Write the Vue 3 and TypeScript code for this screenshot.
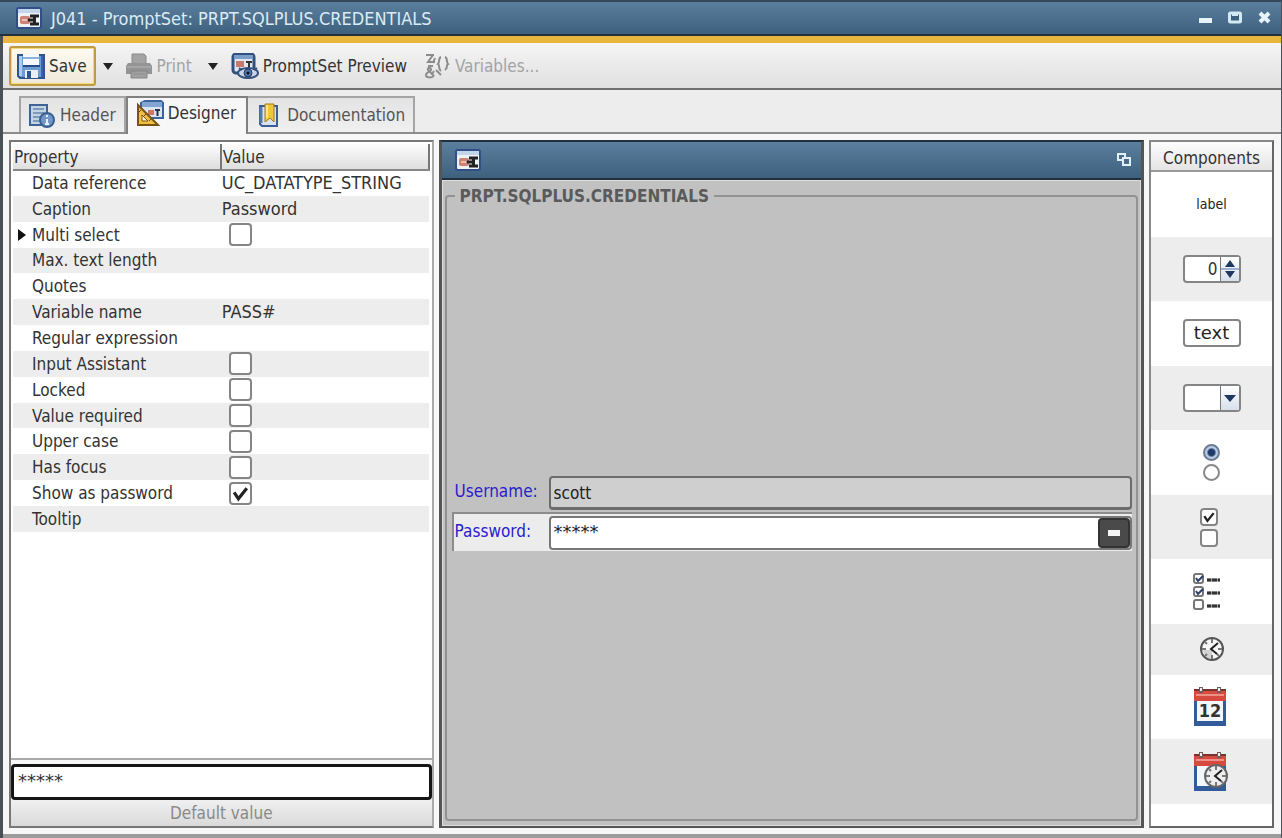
<script setup lang="ts">
import { reactive, ref } from 'vue'

interface PropertyRow {
  name: string
  text?: string
  flag?: boolean
  checkable?: boolean
  expandable?: boolean
}

const properties = reactive<PropertyRow[]>([
  { name: 'Data reference', text: 'UC_DATATYPE_STRING' },
  { name: 'Caption', text: 'Password' },
  { name: 'Multi select', checkable: true, flag: false, expandable: true },
  { name: 'Max. text length' },
  { name: 'Quotes' },
  { name: 'Variable name', text: 'PASS#' },
  { name: 'Regular expression' },
  { name: 'Input Assistant', checkable: true, flag: false },
  { name: 'Locked', checkable: true, flag: false },
  { name: 'Value required', checkable: true, flag: false },
  { name: 'Upper case', checkable: true, flag: false },
  { name: 'Has focus', checkable: true, flag: false },
  { name: 'Show as password', checkable: true, flag: true },
  { name: 'Tooltip' },
])

const defaultValue = ref('*****')
const username = ref('scott')
const password = ref('*****')
</script>

<template>
  <div class="window">
    <header class="titlebar">
      <svg class="form-icon" viewBox="0 0 26 22" aria-hidden="true">
        <rect x="1" y="1" width="24" height="20" rx="2" fill="#eef1f6" stroke="#2f4f86" stroke-width="2" />
        <rect x="2" y="2" width="22" height="4" fill="#c3d5ea" />
        <rect x="4" y="9" width="10" height="8" rx="2" fill="#c98476" />
        <path d="M6 13h5" stroke="#e9c0b7" stroke-width="2" />
        <path d="M14 9h9M14 17h9M18.500 9v8M12 13h5" stroke="#222" stroke-width="3" fill="none" />
      </svg>
      <h1>J041 - PromptSet: PRPT.SQLPLUS.CREDENTIALS</h1>
      <div class="window-buttons">
        <button type="button" aria-label="Minimize">
          <svg viewBox="0 0 16 16"><rect x="2" y="8" width="13" height="5" fill="#e6f3f9" /></svg>
        </button>
        <button type="button" aria-label="Maximize">
          <svg viewBox="0 0 16 16">
            <rect x="2.500" y="3" width="11" height="9" rx="1" fill="#3f6280" stroke="#d3eaf5" stroke-width="3" />
            <path d="M5 5h6" stroke="#d3eaf5" stroke-width="2" />
          </svg>
        </button>
        <button type="button" aria-label="Close">
          <svg viewBox="0 0 16 16"><path d="M3 3l9 9M12 3l-9 9" stroke="#e6f3f9" stroke-width="4" /></svg>
        </button>
      </div>
    </header>

    <div class="toolbar" role="toolbar" aria-label="PromptSet">
      <button type="button" class="tool save">
        <svg viewBox="0 0 28 26" aria-hidden="true">
          <path d="M1 2h26v23H3l-2-2z" fill="#6f9bd3" stroke="#2f558f" stroke-width="2" />
          <path d="M2 3h3v20H2z" fill="#a9cdf0" />
          <rect x="6" y="1" width="16" height="12" fill="#f4f8fb" />
          <path d="M6 5h16" stroke="#8fb3d8" stroke-width="2" />
          <path d="M6 13h17" stroke="#274c88" stroke-width="2" />
          <rect x="8" y="17" width="13" height="8" fill="#e9eef3" />
          <rect x="10" y="18" width="4" height="7" fill="#2d558f" />
          <path d="M24 3h2v21h-2z" fill="#3a66a8" />
        </svg>
        Save
      </button>
      <button type="button" class="arrow" aria-label="Save options">
        <svg viewBox="0 0 10 8"><path d="M0 1h10L5 8z" fill="#222" /></svg>
      </button>
      <button type="button" class="tool print" disabled>
        <svg viewBox="0 0 28 26" aria-hidden="true">
          <path d="M7 1h12l2 2v8H7z" fill="#a4a4a4" stroke="#888" />
          <path d="M3 10h22l2 3v8H1v-8z" fill="#949494" />
          <path d="M2 14h24" stroke="#a6a6a6" stroke-width="2" />
          <path d="M6 18h16v7H6z" fill="#a0a0a0" stroke="#858585" />
          <path d="M8 21h12" stroke="#8e8e8e" />
        </svg>
        Print
      </button>
      <button type="button" class="arrow" aria-label="Print options">
        <svg viewBox="0 0 10 8"><path d="M0 1h10L5 8z" fill="#222" /></svg>
      </button>
      <button type="button" class="tool preview">
        <svg viewBox="0 0 28 26" aria-hidden="true">
          <rect x="2" y="1" width="21" height="19" rx="3" fill="#dfe7f1" stroke="#31507f" stroke-width="3" />
          <rect x="3" y="2" width="19" height="4" fill="#7b9dca" />
          <rect x="5" y="8" width="8" height="6" fill="#c67a6c" />
          <path d="M15 9h6M18 9v6" stroke="#333" stroke-width="2" />
          <ellipse cx="17" cy="20" rx="10" ry="5" fill="#c8d5e6" stroke="#35507d" stroke-width="2" />
          <circle cx="17" cy="20" r="4" fill="#4e76ad" stroke="#243c65" />
          <circle cx="17" cy="20" r="1.500" fill="#111" />
          <path d="M8 15l3 2M26 15l-3 2" stroke="#35507d" stroke-width="2" />
        </svg>
        PromptSet Preview
      </button>
      <button type="button" class="tool variables" disabled>
        <svg viewBox="0 0 28 26" aria-hidden="true" fill="none" stroke="#8c8c8c" stroke-width="2">
          <path d="M3 2h8M10 2L5 9h7M12 5l-2 5" />
          <path d="M11 23c-3 2-8 2-8-1 0-4 6-3 5-6-1-2-4-1-3 1l6 6M5 13h5M11 18l-2 3" />
          <path d="M18 4c-3 1-1 5-3 7 2 1 0 5 3 7M22 4c3 1 1 5 3 7-2 1 0 4-3 6" />
          <path d="M13 17l5 5" />
        </svg>
        Variables...
      </button>
    </div>

    <nav class="tabs" role="tablist">
      <button type="button" role="tab" aria-selected="false" class="tab">
        <svg viewBox="0 0 28 26" aria-hidden="true">
          <rect x="2" y="3" width="17" height="20" fill="#c3d3e3" stroke="#3e6394" stroke-width="2" />
          <path d="M5 7h11M5 11h11M5 15h8M5 19h7" stroke="#7c9abc" stroke-width="2" />
          <circle cx="19" cy="18" r="7" fill="#7398c8" stroke="#3b5f94" stroke-width="2" />
          <path d="M19 17v5M19 13v2M17 22h4" stroke="#e8f0f8" stroke-width="2" />
        </svg>
        Header
      </button>
      <button type="button" role="tab" aria-selected="true" class="tab active">
        <svg viewBox="0 0 28 26" aria-hidden="true">
          <path d="M5 3l4-2h16l2 2v15H5z" fill="#dbe5f2" stroke="#3c639b" stroke-width="2" />
          <path d="M6 2h20v5H6z" fill="#82a5d4" />
          <rect x="12" y="10" width="6" height="5" fill="#cf7568" />
          <path d="M19 10h5M21.500 10v6" stroke="#26334a" stroke-width="2" />
          <path d="M2 5v20h20z" fill="#f0bf42" stroke="#795514" stroke-width="2" />
          <path d="M6 15v6h6z" fill="#f9f1d5" stroke="#795514" />
          <path d="M5 10l-2 2M10 14l-2 2M15 19l-2 2" stroke="#68470c" />
        </svg>
        Designer
      </button>
      <button type="button" role="tab" aria-selected="false" class="tab">
        <svg viewBox="0 0 28 26" aria-hidden="true">
          <path d="M5 4h17v20H7l-2-2z" fill="#d8e3ef" stroke="#3b5f94" stroke-width="2" />
          <path d="M6 5v16" stroke="#527ab0" stroke-width="3" />
          <path d="M10 2h9v18l-4-4-5 4z" fill="#f0c634" stroke="#a47b17" />
          <path d="M12 3v13" stroke="#fae58b" stroke-width="2" />
        </svg>
        Documentation
      </button>
    </nav>

    <main class="workspace">
      <section class="properties" aria-label="Properties">
        <div class="property-area">
          <table>
            <thead>
              <tr><th class="name-col">Property</th><th>Value</th></tr>
            </thead>
            <tbody>
              <tr v-for="row in properties" :key="row.name">
                <td class="name">
                  <svg v-if="row.expandable" class="expander" viewBox="0 0 8 12" aria-hidden="true"><path d="M0 0l8 6-8 6z" fill="#111" /></svg>
                  {{ row.name }}
                </td>
                <td class="value">
                  <input v-if="row.checkable" v-model="row.flag" type="checkbox" class="check" :aria-label="row.name" />
                  <template v-else>{{ row.text }}</template>
                </td>
              </tr>
            </tbody>
          </table>
        </div>
        <div class="default-area">
          <input id="default-value" v-model="defaultValue" class="masked" type="text" />
          <label for="default-value">Default value</label>
        </div>
      </section>

      <section class="designer" aria-label="Designer">
        <header class="designer-title">
          <svg class="form-icon" viewBox="0 0 26 22" aria-hidden="true">
            <rect x="1" y="1" width="24" height="20" rx="2" fill="#eef1f6" stroke="#2f4f86" stroke-width="2" />
            <rect x="2" y="2" width="22" height="4" fill="#c3d5ea" />
            <rect x="4" y="9" width="10" height="8" rx="2" fill="#c98476" />
            <path d="M6 13h5" stroke="#e9c0b7" stroke-width="2" />
            <path d="M14 9h9M14 17h9M18.500 9v8M12 13h5" stroke="#222" stroke-width="3" fill="none" />
          </svg>
          <button type="button" aria-label="Restore">
            <svg viewBox="0 0 16 16" fill="#4b6c89" stroke="#e2eff6" stroke-width="2">
              <rect x="2" y="2" width="7" height="6" />
              <rect x="7" y="6" width="7" height="7" />
            </svg>
          </button>
        </header>
        <div class="canvas">
          <fieldset>
            <legend>PRPT.SQLPLUS.CREDENTIALS</legend>
            <div class="prompts">
              <div class="prompt">
                <label for="username">Username:</label>
                <input id="username" v-model="username" type="text" />
              </div>
              <div class="prompt selected">
                <label for="password">Password:</label>
                <div class="entry">
                  <input id="password" v-model="password" class="masked" type="text" />
                  <button type="button" aria-label="Remove">
                    <svg viewBox="0 0 12 6"><rect width="12" height="6" fill="#f4f4f4" /></svg>
                  </button>
                </div>
              </div>
            </div>
          </fieldset>
        </div>
      </section>

      <section class="palette" aria-labelledby="palette-title">
        <h2 id="palette-title">Components</h2>
        <ul>
          <li class="sample-label">label</li>
          <li>
            <div class="box">
              <input class="number" type="text" value="0" aria-label="Number" />
              <span class="box-button">
                <svg viewBox="0 0 18 24"><path d="M0 12h18" stroke="#9fb2cf" stroke-width="2" /><path d="M9 3l5 7H4zM9 21l5-7H4z" fill="#203860" /></svg>
              </span>
            </div>
          </li>
          <li>
            <div class="box"><input class="sample-text" type="text" value="text" aria-label="Text" /></div>
          </li>
          <li>
            <div class="box">
              <select aria-label="Combo box"><option></option></select>
              <span class="box-button overlay">
                <svg viewBox="0 0 18 24"><path d="M3 9h12l-6 7z" fill="#203860" /></svg>
              </span>
            </div>
          </li>
          <li class="stack">
            <input type="radio" name="sample" checked aria-label="First option" />
            <input type="radio" name="sample" aria-label="Second option" />
          </li>
          <li class="stack">
            <input type="checkbox" class="check small" checked aria-label="Checked option" />
            <input type="checkbox" class="check small" aria-label="Unchecked option" />
          </li>
          <li>
            <svg class="checklist" viewBox="0 0 28 40" aria-hidden="true">
              <g fill="#fff" stroke="#777" stroke-width="2">
                <rect x="1" y="2" width="9" height="9" rx="2" />
                <rect x="1" y="15" width="9" height="9" rx="2" />
                <rect x="1" y="28" width="9" height="9" rx="2" />
              </g>
              <path d="M3 6l2 3 5-5M3 19l2 3 5-5" stroke="#263e68" stroke-width="2" fill="none" />
              <path d="M14 8h13M14 21h13M14 34h13" stroke="#999" stroke-width="3" />
              <path d="M14 8h13M14 21h13M14 34h13" stroke="#333" stroke-width="3" stroke-dasharray="4 1 5 1" />
            </svg>
          </li>
          <li>
            <svg class="clock" viewBox="0 0 26 26" aria-hidden="true">
              <circle cx="13" cy="13" r="11" fill="#f7f7f7" stroke="#555" stroke-width="2" />
              <path d="M4 14h9v9c-5 0-8-4-9-9z" fill="#d2d2d2" />
              <path d="M13 3v4M13 19v4M3 13h4M19 13h4M6 6l2 2M20 20l-2-2M6 20l2-2" stroke="#777" stroke-width="2" />
              <path d="M19 7l-7 6 6 5" fill="none" stroke="#222" stroke-width="2" />
            </svg>
          </li>
          <li>
            <svg class="calendar" viewBox="0 0 36 40" role="img" aria-label="Date">
              <rect x="2" y="2" width="32" height="37" fill="#315b99" />
              <rect x="2" y="2" width="32" height="12" fill="#d64a40" />
              <path d="M2 3h32" stroke="#76342f" stroke-width="2" />
              <path d="M4 8h28" stroke="#ed9088" stroke-width="2" />
              <rect x="5" y="14" width="26" height="20" fill="#f3f6fa" />
              <path d="M9 0v6M27 0v6" stroke="#725b5b" stroke-width="4" />
              <path d="M9 1v3M27 1v3" stroke="#eee" stroke-width="2" />
              <text x="18" y="30" text-anchor="middle">12</text>
            </svg>
          </li>
          <li>
            <svg class="calendar" viewBox="0 0 36 40" aria-hidden="true">
              <rect x="2" y="2" width="32" height="37" fill="#315b99" />
              <rect x="2" y="2" width="32" height="12" fill="#d64a40" />
              <path d="M2 3h32" stroke="#76342f" stroke-width="2" />
              <path d="M4 8h28" stroke="#ed9088" stroke-width="2" />
              <rect x="5" y="14" width="26" height="20" fill="#f3f6fa" />
              <path d="M9 0v6M27 0v6" stroke="#725b5b" stroke-width="4" />
              <path d="M9 1v3M27 1v3" stroke="#eee" stroke-width="2" />
              <circle cx="24" cy="24" r="11" fill="#eee" stroke="#666" stroke-width="2" />
              <path d="M24 14v4M24 30v4M14 24h4M30 24h4M17 17l2 2M31 31l-2-2M17 31l2-2" stroke="#777" stroke-width="2" />
              <path d="M30 18l-7 6 6 5" fill="none" stroke="#222" stroke-width="2" />
            </svg>
          </li>
        </ul>
      </section>
    </main>
  </div>
</template>

<style>
body {
  margin: 0;
}
</style>

<style scoped>
* {
  box-sizing: border-box;
}

.window {
  display: flex;
  flex-direction: column;
  min-height: 100vh;
  padding-bottom: 4px;
  border: solid #4a5058;
  border-width: 0 1px 0 3px;
  background: linear-gradient(#f7f7f7, #f7f7f7) top / 100% calc(100% - 4px) no-repeat #9c9c9c;
  color: #333;
  font-family: "DejaVu Sans Condensed", "DejaVu Sans", sans-serif;
  font-size: 17px;
  line-height: 24px;
}

button,
input,
select {
  margin: 0;
  padding: 0;
  border: 0;
  background: none;
  color: inherit;
  font: inherit;
}

svg {
  display: block;
  flex: none;
}

.titlebar {
  display: flex;
  align-items: center;
  gap: 9px;
  height: 36px;
  margin-left: -3px;
  padding: 0 8px 0 16px;
  border-top: 2px solid #35495b;
  border-bottom: 2px solid #23303b;
  background: linear-gradient(#5a7e9d, #3d617d);
  color: #dcebf4;
}

.form-icon {
  width: 26px;
  height: 22px;
}

h1 {
  flex: 1;
  margin: 0;
  padding-top: 2px;
  font-size: 18px;
  font-weight: 400;
}

.window-buttons {
  display: flex;
  gap: 14px;
}

.window-buttons svg {
  width: 16px;
  height: 16px;
}

.toolbar {
  display: flex;
  align-items: center;
  height: 54px;
  padding: 0 6px;
  border-top: 7px solid #e8b63c;
  border-bottom: 2px solid #707070;
  background: linear-gradient(#f5f5f5, #e0e0e0);
}

.tool {
  display: flex;
  align-items: center;
  gap: 4px;
  white-space: nowrap;
}

.tool svg,
.tab svg {
  width: 28px;
  height: 26px;
}

.tool:disabled {
  color: #a3a3a3;
}

.save {
  height: 40px;
  padding: 0 7px 0 6px;
  border: 2px solid #c09c41;
  border-radius: 3px;
  background: linear-gradient(#fffaf0, #eee9da);
  box-shadow: inset 0 0 0 1px #f4d979;
}

.arrow {
  padding: 6px 7px;
}

.arrow svg {
  width: 10px;
  height: 8px;
}

.print {
  margin: 0 9px 0 5px;
}

.preview {
  margin: 0 16px 0 6px;
}

.tabs {
  display: flex;
  align-items: flex-end;
  height: 44px;
  padding: 6px 16px 0;
  border-bottom: 2px solid #8c8c8c;
  background: #ededed;
}

.tab {
  display: flex;
  align-items: center;
  gap: 4px;
  height: 36px;
  padding: 0 8px 0 7px;
  border: 2px solid #a5a5a5;
  border-bottom: 0;
  background: linear-gradient(#e3e3e3, #f0f0f0);
  color: #555;
}

.tab + .tab {
  border-left: 0;
}

.tab.active {
  height: 38px;
  margin-bottom: -2px;
  padding: 0 10px 6px 8px;
  border-color: #808080;
  border-left: 2px solid #808080;
  background: #f7f7f7;
  color: #333;
}

.workspace {
  display: grid;
  flex: 1;
  grid-template-columns: minmax(0, 425fr) minmax(0, 706fr) 125px;
  gap: 5px;
  padding: 6px 7px 6px 6px;
}

.properties,
.designer,
.palette {
  display: flex;
  flex-direction: column;
}

.properties {
  border: 2px solid #777;
  border-right-color: #aaa;
  background: #f7f7f7;
}

.property-area {
  flex: 1;
  padding: 2px 2px 0;
  border-bottom: 2px solid #aaa;
  background: #fff;
}

table {
  width: 100%;
  height: 388px;
  border-collapse: collapse;
  table-layout: fixed;
  line-height: 20px;
}

th {
  height: 26px;
  padding: 0 1px;
  border-right: 2px solid #777;
  border-bottom: 2px solid #888;
  background: linear-gradient(#fdfdfd, #dedede);
  font-weight: 400;
  text-align: left;
}

th.name-col {
  width: 50%;
}

th,
td {
  vertical-align: middle;
}

td {
  height: 25px;
  padding: 0 1px;
}

td.name {
  padding-left: 19px;
}

td.value {
  font-size: 18px;
}

tbody tr:nth-child(even) {
  background: #ededed;
}

.expander {
  float: left;
  width: 8px;
  height: 12px;
  margin: 4px 0 0 -14px;
}

.check {
  display: block;
  width: 23px;
  height: 23px;
  margin-left: 7px;
  border: 2px solid #858585;
  border-radius: 4px;
  appearance: none;
  background: #fff;
}

.check:checked {
  background: #fff url("data:image/svg+xml,%3Csvg xmlns='http://www.w3.org/2000/svg' viewBox='0 0 18 18'%3E%3Cpath d='M3 8l4 6 8-10' fill='none' stroke='%23222' stroke-width='3'/%3E%3C/svg%3E") center / 100% no-repeat;
}

.default-area {
  display: flex;
  flex-direction: column;
  margin-top: 4px;
}

.default-area input {
  width: 100%;
  height: 36px;
  padding: 0 4px 4px;
  border: 3px solid #151515;
  border-radius: 4px;
  background: #fff;
}

.default-area label {
  height: 26px;
  padding-top: 1px;
  background: linear-gradient(#f0f0f0, #dadada);
  color: #8a8a8a;
  text-align: center;
}

.designer {
  border: 3px solid #555;
  border-top: 2px solid #22303e;
  border-bottom-width: 2px;
}

.designer-title {
  display: flex;
  align-items: center;
  justify-content: space-between;
  height: 38px;
  padding: 0 9px 0 13px;
  border-bottom: 2px solid #22303e;
  background: linear-gradient(#5a7e9d, #3d617d);
}

.designer-title button svg {
  width: 16px;
  height: 16px;
}

.canvas {
  display: flex;
  flex: 1;
  padding: 3px 2px 4px;
  border: 1px solid #dedede;
  background: #c1c1c1;
}

fieldset {
  display: flex;
  flex: 1;
  min-width: 0;
  margin: 0;
  padding: 0 4px 0 5px;
  border: 2px solid #929292;
  border-radius: 4px;
}

legend {
  margin-left: 3px;
  padding: 0 5px;
  color: #5a5a5a;
  font-weight: 700;
}

.prompts {
  display: flex;
  flex: 1;
  flex-direction: column;
  justify-content: center;
  gap: 2px;
}

.prompt {
  display: grid;
  grid-template-columns: 94px 1fr;
  align-items: center;
  padding-left: 3px;
  color: #2a20cc;
}

.prompt label {
  padding-bottom: 4px;
}

.prompt input {
  width: 100%;
  height: 34px;
  padding: 0 3px;
  border: 2px solid #6c6c6c;
  border-bottom-width: 3px;
  border-radius: 4px;
  background: #cfcfcf;
  color: #222;
}

.prompt.selected {
  padding: 2px 0 1px 1px;
  border: solid #8c8c8c;
  border-width: 2px 0 0 2px;
  background: #ececec;
}

.entry {
  display: flex;
  border: 2px solid #777;
  border-radius: 4px;
  background: #fff;
}

.entry input {
  flex: 1;
  min-width: 0;
  height: 30px;
  padding-bottom: 4px;
  border: 0;
  background: #fff;
}

input.masked {
  font-family: "DejaVu Sans", sans-serif;
  font-size: 18px;
}

.entry button {
  display: grid;
  place-items: center;
  width: 32px;
  border: 2px solid #333;
  border-radius: 4px;
  background: #4a4a4a;
}

.entry button svg {
  width: 12px;
  height: 6px;
}

.palette {
  border: 2px solid #888;
  border-right-color: #666;
  border-bottom-color: #666;
  background: #fff;
}

h2 {
  height: 30px;
  margin: 0;
  padding-top: 4px;
  border-bottom: 2px solid #999;
  background: linear-gradient(#fdfdfd, #e4e4e4);
  font-size: 17px;
  font-weight: 400;
  line-height: 24px;
  text-align: center;
}

ul {
  display: grid;
  grid-template-rows: repeat(7, 1fr) 51px repeat(2, 1fr);
  height: 632px;
  margin: 0;
  padding: 0;
  list-style: none;
}

li {
  display: flex;
  align-items: center;
  justify-content: center;
}

li:nth-child(even) {
  background: #ededed;
}

.sample-label {
  color: #222;
  font-size: 14px;
}

.box {
  display: flex;
  position: relative;
  width: 58px;
  height: 28px;
  border: 2px solid #858585;
  border-radius: 4px;
  background: #fff;
}

.box input,
.box select {
  width: 100%;
  min-width: 0;
  appearance: none;
}

.box .number {
  padding-right: 2px;
  font-size: 17px;
  text-align: right;
}

.box .sample-text {
  color: #222;
  font-family: "DejaVu Sans", sans-serif;
  font-size: 18px;
  text-align: center;
}

.box-button {
  flex: none;
  width: 19px;
  border-left: 1px solid #777;
  background: linear-gradient(#fff, #d7e0ec);
}

.box-button.overlay {
  position: absolute;
  inset: 0 0 0 auto;
  pointer-events: none;
}

.box-button svg {
  width: 18px;
  height: 24px;
}

.stack {
  flex-direction: column;
  gap: 3px;
}

.check.small {
  width: 18px;
  height: 18px;
  margin-left: -6px;
}

input[type="radio"] {
  width: 17px;
  height: 17px;
  border: 2px solid #888;
  border-radius: 50%;
  appearance: none;
  background: #fff;
}

input[type="radio"]:checked {
  border-color: #6c7d95;
  background: radial-gradient(circle, #1e3a6b 0 3px, #b9cce4 5px);
}

.checklist {
  width: 28px;
  height: 40px;
  margin-left: -10px;
}

.clock {
  width: 26px;
  height: 26px;
}

.calendar {
  width: 36px;
  height: 40px;
  margin-left: -4px;
}

.calendar text {
  fill: #333;
  font-size: 18px;
  font-weight: 700;
}
</style>
